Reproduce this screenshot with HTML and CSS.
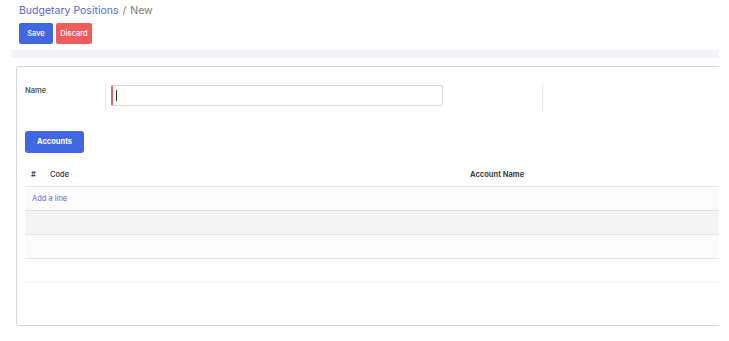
FILE: index.html
```html
<!DOCTYPE html>
<html lang="en">
<head>
    <meta charset="UTF-8">
    <title>Budgetary Positions</title>
    <link rel="stylesheet" href="styles.css">
</head>
<body>
    <div class="page">
        <div class="control-panel">
            <div class="breadcrumb">
                <a href="#">Budgetary Positions</a><span class="sep">/</span><span class="current">New</span>
            </div>
            <div class="buttons">
                <button class="btn btn-save">Save</button>
                <button class="btn btn-discard">Discard</button>
            </div>
        </div>
        <div class="strip"></div>
        <div class="sheet">
            <div class="field-row">
                <label class="field-label">Name</label>
                <div class="field-cell">
                    <div class="input-wrap">
                        <input class="field-input" type="text" value="">
                        <span class="caret"></span>
                    </div>
                </div>
                <div class="field-cell empty"></div>
            </div>
            <div class="tabs">
                <button class="btn btn-tab">Accounts</button>
            </div>
            <div class="lines">
                <div class="line head">
                    <span class="col-num">#</span>
                    <span class="col-code">Code</span>
                    <span class="col-name">Account Name</span>
                </div>
                <div class="line odd">
                    <a href="#" class="add-line">Add a line</a>
                </div>
                <div class="line even"></div>
                <div class="line odd"></div>
                <div class="line blank"></div>
            </div>
        </div>
    </div>
</body>
</html>
```

FILE: styles.css
```css
* {
    box-sizing: border-box;
    font-family: "Inter", "Noto Sans", sans-serif;
}
body {
    margin: 0;
    background: #fff;
}
.page {
    width: 719px;
    padding-left: 11px;
    overflow: hidden;
}
.control-panel {
    padding: 4px 0 0 8px;
}
.breadcrumb {
    font-size: 10.5px;
    line-height: 14px;
    color: #777;
}
.breadcrumb a {
    color: #5b63d3;
    text-decoration: none;
}
.breadcrumb .sep {
    margin: 0 4px;
}
.buttons {
    display: flex;
    gap: 3px;
    margin-top: 5px;
}
.btn {
    appearance: none;
    border: none;
    border-radius: 2px;
    color: #fff;
    font-size: 7.5px;
    font-weight: 500;
    height: 21px;
    padding: 0;
}
.btn-save {
    background: #4168e0;
    width: 34px;
}
.btn-discard {
    background: #f05b5c;
    width: 36px;
}
.strip {
    margin-top: 6px;
    height: 8px;
    background: #f2f3f8;
}
.sheet {
    margin: 8px 0 0 5px;
    width: 740px;
    height: 260px;
    border: 1px solid #d4d3dd;
    border-radius: 3px;
    padding: 18px 0 0 8px;
}
.field-row {
    display: flex;
    height: 25px;
}
.field-label {
    width: 80px;
    font-size: 7.5px;
    font-weight: 600;
    color: #555;
    padding-top: 1px;
}
.field-cell {
    border-left: 1px solid #e6e6e6;
    padding-left: 5px;
    width: 437px;
}
.field-cell.empty {
    width: 200px;
}
.input-wrap {
    position: relative;
    width: 332px;
}
.field-input {
    display: block;
    width: 332px;
    height: 21px;
    border: 1px solid #d9dbe3;
    border-left: 2px solid #f25c5c;
    border-radius: 2px;
    outline: none;
    font-size: 10px;
    padding: 0 4px;
}
.caret {
    position: absolute;
    left: 5px;
    top: 5px;
    width: 1px;
    height: 11px;
    background: #333;
}
.tabs {
    margin-top: 18px;
}
.btn-tab {
    background: #4168e0;
    width: 59px;
    height: 22px;
    font-weight: 700;
    border-radius: 3px;
}
.lines {
    margin-top: 11px;
    font-size: 7.5px;
}
.line {
    display: flex;
    align-items: center;
    height: 24px;
    border-bottom: 1px solid #e2e2ea;
}
.line.head {
    height: 23px;
    color: #333;
    font-weight: 500;
}
.line.odd {
    background: #fbfbfb;
}
.line.even {
    background: #f4f4f4;
}
.line.blank {
    background: #fff;
    border-bottom: 2px solid #f6f6f6;
}
.col-num {
    width: 25px;
    padding-left: 6px;
}
.col-code {
    width: 420px;
}
.col-name {
    font-weight: 700;
    color: #444;
}
.add-line {
    color: #6a64d8;
    text-decoration: none;
    padding-left: 7px;
}
```
